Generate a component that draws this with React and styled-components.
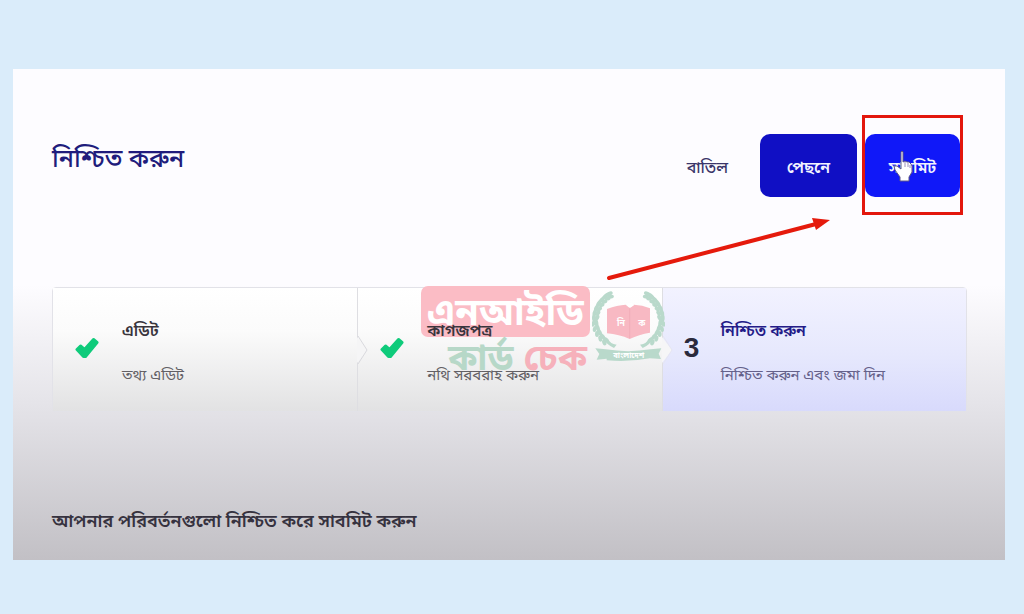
import React from 'react';
import styled, { createGlobalStyle } from 'styled-components';

const GlobalStyle = createGlobalStyle`
  * { box-sizing: border-box; }
  body {
    margin: 0;
    background: #daecfa;
    font-family: "Noto Sans Bengali", "Noto Serif Bengali", "Lohit Bengali", "Liberation Sans", sans-serif;
  }
`;

const Page = styled.div`
  min-height: 100vh;
  padding: 69px 19px 54px 13px;
`;

const Panel = styled.main`
  display: flex;
  flex-direction: column;
  min-height: 491px;
  padding: 46px 38px 16px 39px;
  background: linear-gradient(#fdfcff 0%, #fdfcff 44%, #e5e4e9 68%, #c2c0c5 100%);
`;

const Header = styled.header`
  position: relative;
  display: flex;
  align-items: center;
  justify-content: space-between;
  height: 100px;
  padding-right: 4px;
`;

const Title = styled.h1`
  margin: 0 0 8px;
  color: #211c7c;
  font-size: 25px;
  line-height: 40px;
  font-weight: 500;
`;

const Actions = styled.div`
  display: flex;
  align-items: center;
`;

const CancelLink = styled.a`
  margin-right: 32px;
  padding-top: 8px;
  color: #3a3569;
  font-size: 16px;
  line-height: 32px;
  font-weight: 500;
  text-decoration: none;
`;

const Button = styled.button`
  width: 97px;
  height: 63px;
  padding: 8px 0 0;
  border: 0;
  border-radius: 10px;
  background: ${(p) => (p.$bright ? '#1018f8' : '#100fc4')};
  color: #f2f2ff;
  font: inherit;
  font-size: 16px;
  font-weight: 600;
`;

const Highlight = styled.div`
  position: relative;
  display: flex;
  align-items: center;
  justify-content: center;
  width: 101px;
  height: 100px;
  margin-left: 5px;
  border: 3px solid #e3170d;
`;

const Hand = styled.svg`
  position: absolute;
  left: 28px;
  top: 31px;
  width: 20px;
  height: 34px;
`;

const Arrow = styled.svg`
  position: absolute;
  right: 133px;
  top: 99px;
  width: 230px;
  height: 66px;
  z-index: 3;
`;

const Steps = styled.ol`
  position: relative;
  display: grid;
  grid-template-columns: 1fr 1fr 1fr;
  height: 125px;
  margin: 72px 0 0;
  padding: 0;
  list-style: none;
  border: 1px solid #e2e2e8;
  border-radius: 4px;
`;

const Step = styled.li`
  position: relative;
  display: flex;
  align-items: center;
  padding-left: ${(p) => (p.$active ? '20px' : '22px')};
  border-left: ${(p) => (p.$divided ? '1px solid #dedee2' : '0')};
  background: ${(p) =>
    p.$active
      ? 'linear-gradient(#f2f2ff, #e6e8fd 55%, #d8dafc)'
      : 'linear-gradient(#ffffff, #fbfbfb 35%, #e2e2e3)'};
`;

const Marker = styled.span`
  position: relative;
  display: flex;
  z-index: 2;
  width: ${(p) => (p.$number ? '38px' : '47px')};
  margin-bottom: 4px;
  padding-left: ${(p) => (p.$number ? '1px' : '0')};
  color: #2a2a3c;
  font-family: "Liberation Sans", sans-serif;
  font-size: 28px;
  font-weight: 700;
  line-height: 30px;
`;

const StepText = styled.div`
  position: relative;
  z-index: 2;
  display: flex;
  flex-direction: column;
  gap: 12px;
  padding-top: 8px;
  white-space: nowrap;
`;

const StepTitle = styled.strong`
  color: ${(p) => (p.$active ? '#241b88' : '#39353d')};
  font-size: 16px;
  line-height: 32px;
  font-weight: 600;
`;

const StepNote = styled.span`
  color: ${(p) => (p.$active ? '#65618a' : '#626065')};
  font-size: 15px;
  line-height: 32px;
`;

const Notch = styled.svg`
  position: absolute;
  left: -1px;
  top: 46px;
  width: 12px;
  height: 32px;
  z-index: 1;
`;

const Watermark = styled.div`
  position: absolute;
  left: 368px;
  top: -2px;
  z-index: 1;
  display: flex;
  gap: 2px;
  font-weight: 700;
  pointer-events: none;
`;

const WatermarkTop = styled.div`
  width: 169px;
  height: 51px;
  border-radius: 7px;
  background: #fbbcc5;
  color: #fff;
  font-size: 38px;
  line-height: 60px;
  text-align: center;
  white-space: nowrap;
`;

const WatermarkBottom = styled.div`
  display: flex;
  justify-content: center;
  gap: 10px;
  padding-left: 24px;
  color: #b7d8c8;
  font-size: 36px;
  line-height: 48px;
  white-space: nowrap;
`;

const Pink = styled.span`
  color: #f6b1bb;
`;

const Emblem = styled.svg`
  width: 73px;
  height: 78px;
`;

const Message = styled.p`
  margin: 92px 0 0;
  color: #36323f;
  font-size: 18px;
  line-height: 36px;
  font-weight: 600;
`;

function Check() {
  return (
    <svg width="24" height="24" viewBox="0 0 24 24" aria-label="সম্পন্ন">
      <path d="M2 13.500 5.500 10 9.500 13.500 18.500 3.500 22 6.500 10.500 20.500H8.500Z" fill="#0fcb7b" stroke="#0fcb7b" strokeWidth="3" strokeLinejoin="round" />
    </svg>
  );
}

const leaves = [
  [57, 43, -25], [46, 50, -40], [36, 60, -45], [27, 71, -55], [20, 84, -65], [15, 98, -75],
  [13, 113, -90], [14, 128, 80], [18, 143, 70], [24, 157, 60], [33, 170, 48], [44, 181, 38],
];

function LeafBranch() {
  return (
    <g fill="#b9d9cb">
      {leaves.map(([x, y, r]) => (
        <g key={y} transform={`translate(${x} ${y}) rotate(${r})`}>
          <ellipse cx="0" cy="-3" rx="11" ry="6" />
          <ellipse cx="4" cy="5" rx="9" ry="6" transform="rotate(30)" />
        </g>
      ))}
      <path d="M38 174Q48 194 70 203L78 193Q58 190 48 172Z" />
    </g>
  );
}

function Logo() {
  return (
    <Emblem viewBox="4 17 219 234" aria-hidden="true">
      <LeafBranch />
      <g transform="translate(226 0) scale(-1 1)"><LeafBranch /></g>
      <path d="M49 86Q80 74 105 73L116 82 130 73Q155 74 178 84V157Q145 162 117 176Q85 162 49 159Z" fill="#f8b9c3" />
      <path d="M117 84V174" stroke="#efa7b4" strokeWidth="2" />
      <path d="M110 76 114 67 122 68 130 75 119 82Z" fill="#fff" />
      <path d="M14 204 45 207Q113 218 180 207L212 204 204 220 211 236 178 234Q113 246 48 240V235L18 238 26 221Z" fill="#b9d9cb" />
      <g fill="#fff" fontWeight="700" textAnchor="middle">
        <text x="91" y="136" fontSize="26">নি</text>
        <text x="153" y="136" fontSize="26">ক</text>
        <text x="114" y="234" fontSize="23">বাংলাদেশ</text>
      </g>
    </Emblem>
  );
}

function StepNotch({ active }) {
  return (
    <Notch viewBox="0 0 12 32" aria-hidden="true">
      <path d="M0 0V3L10 16 0 29V32" fill={active ? '#f6f6f7' : '#f5f5f6'} />
      <path d="M1 2 10 16 1 30" fill="none" stroke={active ? '#e6e6f2' : '#d9d9de'} />
    </Notch>
  );
}

const steps = [
  { title: 'এডিট', note: 'তথ্য এডিট' },
  { title: 'কাগজপত্র', note: 'নথি সরবরাহ করুন' },
  { title: 'নিশ্চিত করুন', note: 'নিশ্চিত করুন এবং জমা দিন', number: '3' },
];

export default function App() {
  return (
    <Page>
      <GlobalStyle />
      <Panel>
        <Header>
          <Title>নিশ্চিত করুন</Title>
          <Actions>
            <CancelLink href="#cancel">বাতিল</CancelLink>
            <Button type="button">পেছনে</Button>
            <Highlight>
              <Button type="button" $bright>সাবমিট</Button>
              <Hand viewBox="0 0 20 34" aria-hidden="true">
                <path d="M8 16V3Q9 1 10 3V13L12 12 14 13 16 13 18 15 19 17V23L16 28V32H7V28L2 21 1 17 4 17 8 20Z" fill="#fff" stroke="#5c5688" strokeWidth="1" />
                <path d="M12 13V18M15 14V18M17 16V19" stroke="#9a91bd" />
              </Hand>
            </Highlight>
          </Actions>
          <Arrow viewBox="0 0 230 66" aria-hidden="true">
            <path d="M5 64 212 10" stroke="#e51a0c" strokeWidth="4" strokeLinecap="round" />
            <path d="M226 6 208 4 212 16Z" fill="#e51a0c" />
          </Arrow>
        </Header>
        <Steps>
          {steps.map((s, i) => (
            <Step key={s.title} $active={!!s.number} $divided={i > 0}>
              {i > 0 && <StepNotch active={!!s.number} />}
              <Marker $number={!!s.number}>{s.number || <Check />}</Marker>
              <StepText>
                <StepTitle $active={!!s.number}>{s.title}</StepTitle>
                <StepNote $active={!!s.number}>{s.note}</StepNote>
              </StepText>
            </Step>
          ))}
          <Watermark as="li">
            <div>
              <WatermarkTop>এনআইডি</WatermarkTop>
              <WatermarkBottom>
                <span>কার্ড</span>
                <Pink>চেক</Pink>
              </WatermarkBottom>
            </div>
            <Logo />
          </Watermark>
        </Steps>
        <Message>আপনার পরিবর্তনগুলো নিশ্চিত করে সাবমিট করুন</Message>
      </Panel>
    </Page>
  );
}
